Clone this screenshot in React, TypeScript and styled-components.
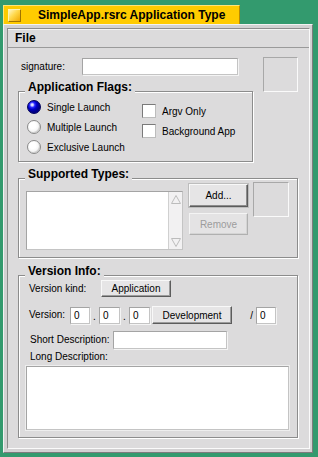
import React from "react";
import styled, { createGlobalStyle } from "styled-components";

const GlobalStyle = createGlobalStyle`
  html, body {
    margin: 0;
    padding: 0;
    background: #339a6e;
  }
  body {
    font-family: "Liberation Sans", Arial, sans-serif;
    font-size: 10px;
    color: #000;
  }
`;

const Page = styled.div`
  width: 318px;
  height: 457px;
  box-sizing: border-box;
  padding: 5px 0 0 3px;
  display: flex;
  flex-direction: column;
  align-items: flex-start;
  background: #339a6e;
`;

const Tab = styled.div`
  width: 237px;
  height: 19px;
  box-sizing: border-box;
  background: #ffcb00;
  border-top: 1px solid #ffe47a;
  border-left: 1px solid #ffe47a;
  border-right: 1px solid #b88a00;
  display: flex;
  align-items: center;
  padding-left: 4px;
`;

const CloseBox = styled.div`
  width: 13px;
  height: 13px;
  box-sizing: border-box;
  border: 1px solid;
  border-color: #fff3b0 #a07400 #a07400 #fff3b0;
  background: linear-gradient(135deg, #fff6c0 0%, #ffd84a 45%, #f0a800 100%);
`;

const TabTitle = styled.div`
  margin-left: 17px;
  font-weight: bold;
  font-size: 12px;
  line-height: 14px;
`;

const Window = styled.div`
  width: 310px;
  height: 429px;
  box-sizing: border-box;
  border: 1px solid;
  border-color: #f2f2f2 #7c7c7c #7c7c7c #f2f2f2;
  background: #d2d1d2;
  padding: 3px;
  display: flex;
`;

const Inner = styled.div`
  flex: 1;
  border: 1px solid;
  border-color: #8c8c8c #fafafa #fafafa #8c8c8c;
  background: #dcdbdc;
  display: flex;
  flex-direction: column;
`;

const MenuBar = styled.div`
  height: 18px;
  border-bottom: 1px solid #9a9a9a;
  box-shadow: inset 0 1px 0 #f4f4f4;
  display: flex;
  align-items: center;
  padding-left: 7px;
  font-weight: bold;
  font-size: 12px;
`;

const Content = styled.div`
  padding: 10px 11px 0 9px;
  display: flex;
  flex-direction: column;
  align-items: flex-start;
`;

const TopSection = styled.div`
  width: 100%;
  display: flex;
  justify-content: space-between;
  align-items: flex-start;
`;

const LeftCol = styled.div`
  display: flex;
  flex-direction: column;
  align-items: flex-start;
`;

const Row = styled.div<{ $mt?: number; $pl?: number }>`
  display: flex;
  align-items: center;
  margin-top: ${({ $mt }) => $mt ?? 0}px;
  padding-left: ${({ $pl }) => $pl ?? 0}px;
`;

const Label = styled.div<{ $w?: number }>`
  width: ${({ $w }) => ($w ? `${$w}px` : "auto")};
  flex-shrink: 0;
  font-size: 10px;
  line-height: 14px;
  white-space: nowrap;
`;

const Field = styled.div<{ $w: number; $h?: number }>`
  width: ${({ $w }) => $w}px;
  height: ${({ $h }) => $h ?? 17}px;
  box-sizing: border-box;
  background: #fff;
  border: 1px solid;
  border-color: #a4a4a4 #c4c4c4 #c4c4c4 #a4a4a4;
  box-shadow: 1px 1px 0 #f4f4f4;
  padding: 1px 0 0 3px;
  font-size: 10px;
  line-height: 13px;
`;

const IconWell = styled.div<{ $w: number; $h: number; $mt?: number; $ml?: number }>`
  width: ${({ $w }) => $w}px;
  height: ${({ $h }) => $h}px;
  margin-top: ${({ $mt }) => $mt ?? 0}px;
  margin-left: ${({ $ml }) => $ml ?? 0}px;
  box-sizing: border-box;
  border: 1px solid;
  border-color: #a8a8a8 #fafafa #fafafa #a8a8a8;
  background: #dcdbdc;
  flex-shrink: 0;
`;

const Group = styled.div<{ $w: number; $h: number; $mt?: number }>`
  width: ${({ $w }) => $w}px;
  height: ${({ $h }) => $h}px;
  margin-top: ${({ $mt }) => $mt ?? 0}px;
  margin-left: 1px;
  box-sizing: border-box;
  border: 1px solid #8c8c8c;
  box-shadow: 1px 1px 0 #fff, inset 1px 1px 0 #fff;
  display: flex;
  flex-direction: column;
  align-items: flex-start;
  flex-shrink: 0;
`;

const GroupTitle = styled.div`
  margin: -12px 0 0 6px;
  padding: 0 3px;
  background: #dcdbdc;
  font-weight: bold;
  font-size: 12px;
  line-height: 14px;
`;

const FlagsBody = styled.div`
  display: flex;
  margin-top: 6px;
  padding-left: 8px;
`;

const OptionCol = styled.div<{ $w?: number; $mt?: number }>`
  width: ${({ $w }) => ($w ? `${$w}px` : "auto")};
  margin-top: ${({ $mt }) => $mt ?? 0}px;
  display: flex;
  flex-direction: column;
  gap: 6px;
`;

const Option = styled.div`
  display: flex;
  align-items: center;
  gap: 6px;
  height: 14px;
  font-size: 10px;
  white-space: nowrap;
`;

const Radio = styled.div<{ $on?: boolean }>`
  width: 14px;
  height: 14px;
  box-sizing: border-box;
  border-radius: 50%;
  border: 1px solid ${({ $on }) => ($on ? "#00005a" : "#8a8a8a")};
  background: ${({ $on }) =>
    $on
      ? "radial-gradient(circle at 35% 32%, #ffffff 0, #c8c8ff 1.2px, #2a2aff 2.6px, #0000c8 4.5px, #00008a 7px)"
      : "radial-gradient(circle at 40% 38%, #ffffff 0, #ffffff 3px, #f0f0f0 7px)"};
  box-shadow: ${({ $on }) => ($on ? "0 0 0 0 transparent" : "inset -1px -1px 0 #d0d0d0")};
  flex-shrink: 0;
`;

const Check = styled.div`
  width: 14px;
  height: 14px;
  box-sizing: border-box;
  border: 1px solid;
  border-color: #7a7a7a #bcbcbc #bcbcbc #7a7a7a;
  background: #fff;
  flex-shrink: 0;
`;

const TypesBody = styled.div`
  display: flex;
  align-items: flex-start;
  padding-left: 7px;
`;

const ListBox = styled.div`
  width: 157px;
  height: 59px;
  margin-top: 10px;
  box-sizing: border-box;
  border: 1px solid;
  border-color: #a4a4a4 #c4c4c4 #c4c4c4 #a4a4a4;
  background: #fff;
  display: flex;
  justify-content: flex-end;
`;

const ScrollBar = styled.div`
  width: 14px;
  box-sizing: border-box;
  border-left: 1px solid #d0d0d0;
  background: #f2f1f2;
  display: flex;
  flex-direction: column;
  justify-content: space-between;
`;

const ScrollArrow = styled.div`
  height: 14px;
  display: flex;
  align-items: center;
  justify-content: center;
`;

const ButtonCol = styled.div`
  margin: 3px 0 0 6px;
  display: flex;
  flex-direction: column;
  gap: 6px;
`;

const Button = styled.div<{ $w: number; $h: number; $disabled?: boolean; $default?: boolean; $ml?: number }>`
  width: ${({ $w }) => $w}px;
  height: ${({ $h }) => $h}px;
  margin-left: ${({ $ml }) => $ml ?? 0}px;
  box-sizing: border-box;
  border: 1px solid;
  border-color: ${({ $disabled }) =>
    $disabled ? "#f4f4f4 #b0b0b0 #b0b0b0 #f4f4f4" : "#f8f8f8 #5c5c5c #5c5c5c #f8f8f8"};
  box-shadow: ${({ $disabled, $default }) =>
    $disabled
      ? "inset -1px -1px 0 #d4d4d4"
      : $default
      ? "inset -1px -1px 0 #8c8c8c, 0 0 0 1px #bdbdbd"
      : "inset -1px -1px 0 #9c9c9c"};
  background: ${({ $disabled }) => ($disabled ? "#e4e3e4" : "#e6e5e6")};
  color: ${({ $disabled }) => ($disabled ? "#9c9c9c" : "#000")};
  display: flex;
  align-items: center;
  justify-content: center;
  font-size: 10px;
  flex-shrink: 0;
`;

const VersionBody = styled.div`
  display: flex;
  flex-direction: column;
  align-items: flex-start;
  padding-left: 7px;
`;

const Dot = styled.div`
  width: 9px;
  text-align: center;
  font-size: 10px;
  line-height: 14px;
  padding-top: 3px;
`;

const Slash = styled.div`
  width: 24px;
  box-sizing: border-box;
  padding-right: 3px;
  text-align: right;
  font-size: 10px;
`;

const TextArea = styled.div`
  width: 263px;
  height: 64px;
  margin-top: 2px;
  box-sizing: border-box;
  border: 1px solid;
  border-color: #a4a4a4 #c4c4c4 #c4c4c4 #a4a4a4;
  box-shadow: 0 0 0 1px #eeeeee;
  background: #fff;
`;

const Arrow: React.FC<{ down?: boolean }> = ({ down }) => (
  <svg width="10" height="9" viewBox="0 0 10 9">
    <polygon
      points={down ? "0.5,0.5 9.5,0.5 5,8.5" : "5,0.5 9.5,8.5 0.5,8.5"}
      fill="none"
      stroke="#bcbcbc"
      strokeWidth="1"
    />
  </svg>
);

export default function App() {
  return (
    <Page>
      <GlobalStyle />
      <Tab>
        <CloseBox />
        <TabTitle>SimpleApp.rsrc Application Type</TabTitle>
      </Tab>
      <Window>
        <Inner>
          <MenuBar>File</MenuBar>
          <Content>
            <TopSection>
              <LeftCol>
                <Row $pl={4}>
                  <Label $w={61}>signature:</Label>
                  <Field $w={156} />
                </Row>
                <Group $w={235} $h={71} $mt={16}>
                  <GroupTitle>Application Flags:</GroupTitle>
                  <FlagsBody>
                    <OptionCol $w={115}>
                      <Option>
                        <Radio $on />
                        Single Launch
                      </Option>
                      <Option>
                        <Radio />
                        Multiple Launch
                      </Option>
                      <Option>
                        <Radio />
                        Exclusive Launch
                      </Option>
                    </OptionCol>
                    <OptionCol $mt={4}>
                      <Option>
                        <Check />
                        Argv Only
                      </Option>
                      <Option>
                        <Check />
                        Background App
                      </Option>
                    </OptionCol>
                  </FlagsBody>
                </Group>
              </LeftCol>
              <IconWell $w={35} $h={35} $mt={-1} />
            </TopSection>

            <Group $w={280} $h={80} $mt={16}>
              <GroupTitle>Supported Types:</GroupTitle>
              <TypesBody>
                <ListBox>
                  <ScrollBar>
                    <ScrollArrow>
                      <Arrow />
                    </ScrollArrow>
                    <ScrollArrow>
                      <Arrow down />
                    </ScrollArrow>
                  </ScrollBar>
                </ListBox>
                <ButtonCol>
                  <Button $w={59} $h={23} $default>
                    Add...
                  </Button>
                  <Button $w={59} $h={22} $disabled>
                    Remove
                  </Button>
                </ButtonCol>
                <IconWell $w={36} $h={35} $mt={1} $ml={5} />
              </TypesBody>
            </Group>

            <Group $w={280} $h={163} $mt={17}>
              <GroupTitle>Version Info:</GroupTitle>
              <VersionBody>
                <Row $mt={2} $pl={3}>
                  <Label $w={72}>Version kind:</Label>
                  <Button $w={70} $h={17}>
                    Application
                  </Button>
                </Row>
                <Row $mt={9} $pl={3}>
                  <Label $w={41}>Version:</Label>
                  <Field $w={20}>0</Field>
                  <Dot>.</Dot>
                  <Field $w={21}>0</Field>
                  <Dot>.</Dot>
                  <Field $w={21}>0</Field>
                  <Button $w={80} $h={18} $ml={2}>
                    Development
                  </Button>
                  <Slash>/</Slash>
                  <Field $w={20}>0</Field>
                </Row>
                <Row $mt={7} $pl={4}>
                  <Label $w={83}>Short Description:</Label>
                  <Field $w={114} $h={18} />
                </Row>
                <Row $mt={1} $pl={4}>
                  <Label>Long Description:</Label>
                </Row>
                <TextArea />
              </VersionBody>
            </Group>
          </Content>
        </Inner>
      </Window>
    </Page>
  );
}
